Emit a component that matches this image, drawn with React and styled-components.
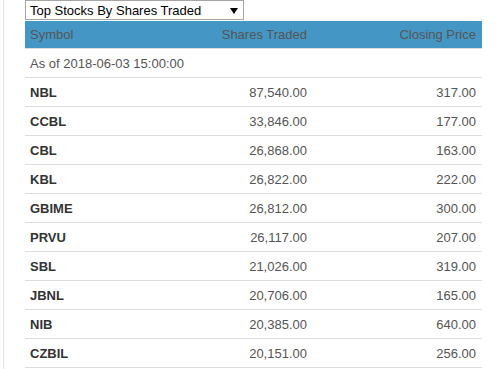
import React from 'react'
import styled, { createGlobalStyle } from 'styled-components'

const rows = [
  ['NBL', '87,540.00', '317.00'],
  ['CCBL', '33,846.00', '177.00'],
  ['CBL', '26,868.00', '163.00'],
  ['KBL', '26,822.00', '222.00'],
  ['GBIME', '26,812.00', '300.00'],
  ['PRVU', '26,117.00', '207.00'],
  ['SBL', '21,026.00', '319.00'],
  ['JBNL', '20,706.00', '165.00'],
  ['NIB', '20,385.00', '640.00'],
  ['CZBIL', '20,151.00', '256.00'],
]

function App() {
  return (
    <>
      <GlobalStyle />
      <Page>
        <Panel>
          <Select>
            <span>Top Stocks By Shares Traded</span>
            <Arrow width="8" height="6" viewBox="0 0 8 6">
              <polygon points="0,0 8,0 4,6" fill="#000" />
            </Arrow>
          </Select>
          <Table>
            <HeadRow>
              <Cell>Symbol</Cell>
              <Cell $right>Shares Traded</Cell>
              <Cell $right>Closing Price</Cell>
            </HeadRow>
            <Row>
              <Note>As of 2018-06-03 15:00:00</Note>
            </Row>
            {rows.map(([sym, shares, price]) => (
              <Row key={sym}>
                <Symbol>{sym}</Symbol>
                <Cell $right>{shares}</Cell>
                <Cell $right>{price}</Cell>
              </Row>
            ))}
          </Table>
        </Panel>
      </Page>
    </>
  )
}

export default App

const GlobalStyle = createGlobalStyle`
body {
  margin: 0;
  background: #fff;
  font-family: "Liberation Sans", Arial, sans-serif;
  font-size: 13px;
}
`

const Page = styled.div`
width: 502px;
height: 369px;
overflow: hidden;
padding-left: 3px;
box-sizing: border-box;
`

const Panel = styled.div`
height: 100%;
border-left: 1px solid #e3e3e3;
padding-left: 21px;
width: 457px;
`

const Select = styled.div`
box-sizing: border-box;
width: 219px;
height: 20px;
border: 1px solid #a6a6a6;
display: flex;
align-items: center;
justify-content: space-between;
padding: 0 5px 0 4px;
color: #000;
font-size: 13px;
margin-bottom: 1px;
`

const Arrow = styled.svg`
display: block;
margin-top: 1px;
`

const Table = styled.div`
display: grid;
grid-template-columns: 120px 168px 1fr;
`

const Row = styled.div`
display: contents;
& > * {
  height: 28px;
  border-bottom: 1px solid #dddddd;
}
`

const HeadRow = styled.div`
display: contents;
& > * {
  height: 27px;
  background: #4497c5;
  color: #fff;
  border-bottom: 1px solid #dddddd;
}
`

const Cell = styled.div`
display: flex;
align-items: center;
justify-content: ${p => (p.$right ? 'flex-end' : 'flex-start')};
padding: 0 6px 0 5px;
color: #555;
`

const Symbol = styled(Cell)`
color: #333;
font-weight: 700;
`

const Note = styled(Cell)`
grid-column: 1 / -1;
color: #555;
`
